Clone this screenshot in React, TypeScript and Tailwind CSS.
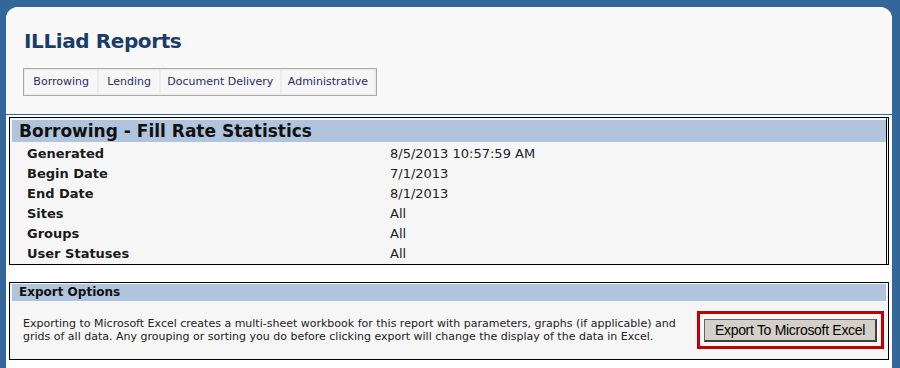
const tabs = [
  { label: "Borrowing", w: "w-[73px]" },
  { label: "Lending", w: "w-[60px]" },
  { label: "Document Delivery", w: "w-[120px]" },
  { label: "Administrative", w: "w-[93px]" },
];

const params = [
  ["Generated", "8/5/2013 10:57:59 AM"],
  ["Begin Date", "7/1/2013"],
  ["End Date", "8/1/2013"],
  ["Sites", "All"],
  ["Groups", "All"],
  ["User Statuses", "All"],
];

export default function App() {
  return (
    <div className="h-[368px] w-[900px] overflow-hidden bg-[#336699] pl-[6px] pr-[8px] pt-[7px] font-['DejaVu_Sans',Verdana,sans-serif]">
      <div className="h-full overflow-hidden rounded-t-[12px] bg-white">
        <header className="h-[108px] border-b border-[#336699] bg-[#f9f9f9] pl-[17px] pt-[22px]">
          <h1 className="pl-[1px] text-[20px] font-bold leading-[24px] tracking-[-0.4px] text-[#1b3c6a]">
            ILLiad Reports
          </h1>
          <nav className="mt-[15px] flex h-[28px] w-[354px] gap-[2px] border border-[#a9a9a9] bg-[#ececec] py-[1px] pl-[1px] pr-[2px]">
            {tabs.map((t) => (
              <span
                key={t.label}
                className={`${t.w} flex h-[24px] items-center justify-center bg-[#f6f6f6] text-[11px] text-[#1f2f5f]`}
              >
                {t.label}
              </span>
            ))}
          </nav>
        </header>

        <section className="mx-[3px] mt-[2px] flex border border-black bg-[#f6f6f6] pr-[1px]">
          <div className="flex-1 border-r border-black pl-[2px] pt-[2px]">
            <h2 className="h-[22px] bg-[#b0c4de] pl-[7px] text-[17px] font-bold leading-[22px] text-[#111]">
              Borrowing - Fill Rate Statistics
            </h2>
            <div className="mt-[2px] grid grid-cols-[363px_1fr] pl-[15px]">
              {params.map(([k, v]) => (
                <div key={k} className="contents">
                  <span className="text-[13px] font-bold leading-[20px] text-[#1a1a1a]">{k}</span>
                  <span className="text-[13px] leading-[20px] text-[#222]">{v}</span>
                </div>
              ))}
            </div>
          </div>
        </section>

        <section className="mx-[3px] mt-[17px] border border-black bg-[#f6f6f6] px-[2px] pt-[1px]">
          <h2 className="h-[17px] bg-[#b0c4de] pl-[7px] text-[12px] font-bold leading-[17px] text-[#111]">
            Export Options
          </h2>
          <div className="flex h-[58px] items-center justify-between pl-[11px] pr-[2px]">
            <p className="text-[11px] leading-[13px] text-[#222]">
              Exporting to Microsoft Excel creates a multi-sheet workbook for this report with parameters, graphs (if applicable) and
              <br />
              grids of all data. Any grouping or sorting you do before clicking export will change the display of the data in Excel.
            </p>
            <div className="border-[3px] border-[#c00000] pb-[4px] pl-[4px] pr-[4px] pt-[5px]">
              <button
                type="button"
                className="flex h-[23px] w-[173px] items-center justify-center border border-[#666] border-b-2 border-r-2 border-b-[#404040] border-r-[#404040] bg-[#d4d0c8] font-['Liberation_Sans',Arial,sans-serif] text-[14px] tracking-[-0.3px] text-black"
              >
                Export To Microsoft Excel
              </button>
            </div>
          </div>
        </section>
      </div>
    </div>
  );
}
